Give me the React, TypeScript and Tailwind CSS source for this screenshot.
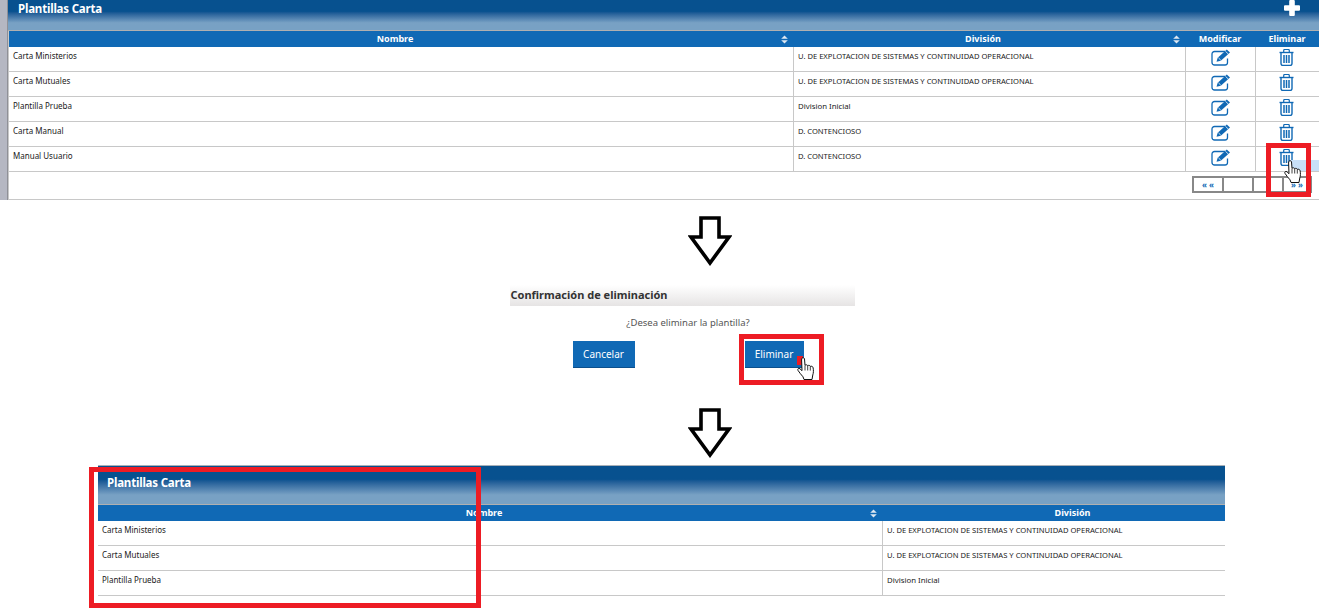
import React from "react";

const font = { fontFamily: '"Noto Sans", "Open Sans", sans-serif' };

function EditIcon() {
  return (
    <svg width="20" height="17" viewBox="0 0 20 17" fill="none">
      <path d="M14 2.500H3.500A2.500 2.500 0 0 0 1 5v8.500A2.500 2.500 0 0 0 3.500 16h10.500a2.500 2.500 0 0 0 2.500-2.500V9.500" stroke="#1069b5" strokeWidth="1.300" />
      <path d="M5.500 12.800l1.200-4L15.800 0.600l3.200 3-9.200 8.200z" fill="#1069b5" />
      <path d="M14.500 2.400l3 2.800" stroke="#fff" strokeWidth="0.800" />
      <path d="M7.400 8.800l2.400 2.400" stroke="#fff" strokeWidth="0.800" />
    </svg>
  );
}

function TrashIcon() {
  return (
    <svg width="15" height="17" viewBox="0 0 15 17" fill="none">
      <path d="M0.500 3.500h14" stroke="#1069b5" strokeWidth="1.400" />
      <path d="M4.700 3.500V1.500a1 1 0 0 1 1-1h3.600a1 1 0 0 1 1 1v2" stroke="#1069b5" strokeWidth="1.200" />
      <path d="M2 3.500v11a2 2 0 0 0 2 2h7a2 2 0 0 0 2-2v-11" stroke="#1069b5" strokeWidth="1.400" />
      <path d="M5 6v8M7.500 6v8M10 6v8" stroke="#1069b5" strokeWidth="1.500" />
    </svg>
  );
}

function SortIcon() {
  return (
    <svg width="7" height="9" viewBox="0 0 7 9" className="shrink-0">
      <path d="M3.500 0.500L6.800 3.800H0.200z" fill="#dfe8f2" />
      <path d="M3.500 8.500L0.200 5.200H6.800z" fill="#dfe8f2" />
    </svg>
  );
}

function HandCursor({ className }: { className: string }) {
  return (
    <svg width="18" height="23" viewBox="0 0 18 23" className={className}>
      <path
        d="M5 1.200c.8-.9 2.300-.6 2.500.8l.5 6.300c.8-.8 2.300-.7 2.700.4.800-.6 2.300-.4 2.600.7.900-.5 2.500-.1 2.800 1.300.5 2.800.4 5.300-.3 7.200l-.8 4.600H7l-1-2.700C4.400 18 2.300 15.400 1 13.400c-.8-1.400.7-2.700 2-1.600l2 1.900-.4-10.700c0-.7.100-1.300.4-1.800z"
        fill="#fff"
        stroke="#111"
        strokeWidth="1"
        strokeLinejoin="round"
      />
      <path d="M8 8.500v5M10.700 9v4.500M13.300 9.600v4" stroke="#111" strokeWidth="0.800" />
    </svg>
  );
}

function DownArrow() {
  return (
    <svg width="44" height="50" viewBox="0 0 44 50" fill="none" className="block">
      <path d="M13 2h18v19h10L22 47 3 21h10z" fill="#fff" stroke="#000" strokeWidth="3.600" strokeLinejoin="miter" />
    </svg>
  );
}

function PlusIcon() {
  return (
    <svg width="16" height="16" viewBox="0 0 16 16">
      <path d="M5.200 1a1 1 0 0 1 1-1h3.600a1 1 0 0 1 1 1v4.200H15a1 1 0 0 1 1 1v3.600a1 1 0 0 1-1 1h-4.200V15a1 1 0 0 1-1 1H6.200a1 1 0 0 1-1-1v-4.200H1a1 1 0 0 1-1-1V6.200a1 1 0 0 1 1-1h4.200z" fill="#fff" />
    </svg>
  );
}

const titleText = "text-[11.500px] leading-[18px] font-bold tracking-[-0.2px] text-white";

const rowsTop = [
  { name: "Carta Ministerios", div: "U. DE EXPLOTACION DE SISTEMAS Y CONTINUIDAD OPERACIONAL", caps: true },
  { name: "Carta Mutuales", div: "U. DE EXPLOTACION DE SISTEMAS Y CONTINUIDAD OPERACIONAL", caps: true },
  { name: "Plantilla Prueba", div: "Division Inicial", caps: false },
  { name: "Carta Manual", div: "D. CONTENCIOSO", caps: true },
  { name: "Manual Usuario", div: "D. CONTENCIOSO", caps: true },
];

function DivisionText({ text, caps }: { text: string; caps: boolean }) {
  return <span className={caps ? "text-[7.600px]" : "text-[7.800px]"}>{text}</span>;
}

function TopTable() {
  return (
    <section className="relative h-[200px] flex shrink-0">
      <div className="w-2 bg-[#b5b7c2] border-r border-r-[#8f9097]" />
      <div className="flex-1">
        <div className="flex justify-between h-[31px] bg-gradient-to-b from-[#07518f] from-[38%] to-[#78a1c4] to-[76%] border-b border-b-[#b0b0b0]">
          <span className={`pl-[10px] ${titleText}`}>Plantillas Carta</span>
          <span className="pr-[19px]"><PlusIcon /></span>
        </div>
        <div className="border-l border-l-[#c8c8c8]">
          <div className="flex h-4 bg-[#1069b5] text-white text-[9px] leading-4 font-bold">
            <div className="w-[784px] flex items-center pr-[5px]">
              <span className="flex-1 text-center">Nombre</span>
              <SortIcon />
            </div>
            <div className="w-[392px] flex items-center pr-[5px]">
              <span className="flex-1 text-center">División</span>
              <SortIcon />
            </div>
            <div className="w-[70px] text-center">Modificar</div>
            <div className="flex-1 text-center">Eliminar</div>
          </div>
          {rowsTop.map((r) => (
            <div key={r.name} className="flex h-[25px] border-b border-b-[#c8c8c8] text-[8px] leading-[17px] text-[#1a1a1a]">
              <div className="w-[784px] pl-1">{r.name}</div>
              <div className="w-[392px] pl-1 border-l border-l-[#c8c8c8]"><DivisionText text={r.div} caps={r.caps} /></div>
              <div className="w-[70px] border-l border-l-[#c8c8c8] flex justify-center pt-[2px]"><EditIcon /></div>
              <div className="flex-1 border-l border-l-[#c8c8c8] flex justify-center pt-[2px] pr-[3px]"><TrashIcon /></div>
            </div>
          ))}
          <div className="flex justify-end h-[28px] border-b border-b-[#c8c8c8] pr-[7px] pt-[4px]">
            <div className="flex h-[17px] border-2 border-[#888] text-[8px] leading-[13px] text-[#1069b5] font-bold">
              <div className="w-[30px] text-center border-r-2 border-r-[#888]">« «</div>
              <div className="w-[30px] border-r-2 border-r-[#888]" />
              <div className="w-[30px] border-r-2 border-r-[#888]" />
              <div className="w-[26px] text-center">» »</div>
            </div>
          </div>
        </div>
      </div>
      <div className="absolute left-[1290px] top-[160px] w-[29px] h-[11px] bg-[#c8e0f8]" />
      <div className="absolute left-[1266px] top-[143px] w-[45px] h-[54px] border-[5px] border-[#ed1c24]" />
      <HandCursor className="absolute left-[1284px] top-[160px]" />
    </section>
  );
}

function Dialog() {
  return (
    <section className="relative h-[100px] mt-[19px] flex flex-col items-center shrink-0">
      <div className="w-[345px] h-[21px] ml-[45px] bg-gradient-to-b from-white to-[#e6e4e4] text-[11px] leading-[20px] font-bold text-[#333] pl-px">
        Confirmación de eliminación
      </div>
      <p className="mt-[10px] ml-[57px] text-[9.500px] leading-[14px] text-[#555]">¿Desea eliminar la plantilla?</p>
      <div className="flex gap-[110px] mt-[11px] ml-[57px]">
        <button className="w-[62px] h-[27px] bg-[#1069b5] border-b border-b-[#0b4f8c] text-white text-[10px]">Cancelar</button>
        <button className="w-[59px] h-[27px] bg-[#1069b5] border-b border-b-[#0b4f8c] text-white text-[10px]">Eliminar</button>
      </div>
      <div className="absolute left-[739px] top-[49px] w-[85px] h-[51px] border-[5px] border-[#ed1c24]" />
      <div className="absolute left-[797px] top-[71px] w-[6px] h-[9px] bg-[#ed1c24]" />
      <HandCursor className="absolute left-[797px] top-[72px]" />
    </section>
  );
}

function BottomTable() {
  return (
    <section className="relative ml-[98px] mr-[94px] mt-[7px] shrink-0">
      <div className="h-[40px] bg-gradient-to-b from-[#07518f] from-[35%] to-[#78a1c4] to-[76%] border-t border-t-[#a8b0b8] border-b border-b-[#b0b0b0]">
        <span className={`block pl-[9px] pt-[8px] ${titleText}`}>Plantillas Carta</span>
      </div>
      <div className="flex h-4 bg-[#1069b5] text-white text-[9px] leading-4 font-bold">
        <div className="w-[784px] flex items-center pr-[5px]">
          <span className="flex-1 text-center">Nombre</span>
          <SortIcon />
        </div>
        <div className="flex-1 text-center pl-[38px]">División</div>
      </div>
      {rowsTop.slice(0, 3).map((r) => (
        <div key={r.name} className="flex h-[25px] border-b border-b-[#c8c8c8] text-[8px] leading-[17px] text-[#1a1a1a]">
          <div className="w-[784px] pl-1">{r.name}</div>
          <div className="flex-1 pl-1 border-l border-l-[#c8c8c8]"><DivisionText text={r.div} caps={r.caps} /></div>
        </div>
      ))}
      <div className="absolute left-[-9px] top-[2px] w-[392px] h-[141px] border-[5px] border-[#ed1c24]" />
    </section>
  );
}

export default function App() {
  return (
    <div className="relative w-[1319px] h-[610px] bg-white overflow-hidden flex flex-col" style={font}>
      <TopTable />
      <div className="flex justify-center pl-[101px] mt-[16px] shrink-0"><DownArrow /></div>
      <Dialog />
      <div className="flex justify-center pl-[101px] shrink-0 mt-[23px]"><DownArrow /></div>
      <BottomTable />
    </div>
  );
}
